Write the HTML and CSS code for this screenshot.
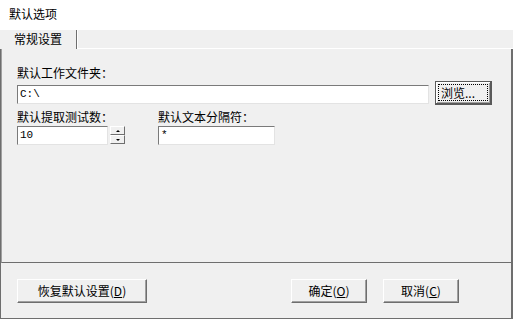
FILE: index.html
```html
<!DOCTYPE html>
<html lang="zh-CN">
<head>
<meta charset="utf-8">
<title>默认选项</title>
<link rel="stylesheet" href="styles.css">
</head>
<body>
<div class="window">
  <div class="titlebar">默认选项</div>
  <div class="tabstrip">
    <div class="tab">常规设置</div>
    <div class="tabfill"></div>
  </div>
  <div class="frame">
    <div class="panel">
      <div class="label">默认工作文件夹：</div>
      <div class="row1">
        <div class="field field-wide">C:\</div>
        <button class="btn btn-browse"><span class="focus">浏览...</span></button>
      </div>
      <div class="row2">
        <div class="group">
          <div class="label">默认提取测试数：</div>
          <div class="spinrow">
            <div class="field field-num">10</div>
            <div class="spin">
              <div class="spinbtn"><span class="tri-up"></span></div>
              <div class="spinbtn"><span class="tri-down"></span></div>
            </div>
          </div>
        </div>
        <div class="group group-sep">
          <div class="label">默认文本分隔符：</div>
          <div class="field field-sep">*</div>
        </div>
      </div>
    </div>
    <div class="footer">
      <button class="btn btn-reset">恢复默认设置(<u>D</u>)</button>
      <div class="spacer"></div>
      <button class="btn btn-ok">确定(<u>O</u>)</button>
      <button class="btn btn-cancel">取消(<u>C</u>)</button>
    </div>
  </div>
</div>
</body>
</html>
```

FILE: styles.css
```css
html, body {
  margin: 0;
  padding: 0;
  background: #f0f0f0;
}
body {
  font-family: "Noto Sans CJK SC", "Liberation Sans", sans-serif;
  font-size: 12px;
  color: #000;
}
.window {
  width: 513px;
  height: 319px;
  display: flex;
  flex-direction: column;
  overflow: hidden;
}
.titlebar {
  height: 30px;
  background: #fff;
  line-height: 28px;
  padding-left: 9px;
  font-size: 12px;
  color: #000;
  flex: none;
}
.tabstrip {
  height: 19px;
  display: flex;
  flex: none;
  background: #f0f0f0;
}
.tab {
  width: 62px;
  padding-left: 14px;
  line-height: 17px;
  border-right: 1px solid #6e6e6e;
  background: #f0f0f0;
}
.tabfill {
  flex: 1;
  border-left: 1px solid #fff;
  border-bottom: 1px solid #fff;
}
.frame {
  flex: 1;
  display: flex;
  flex-direction: column;
  border-left: 1px solid #6e6e6e;
  border-right: 2px solid #6e6e6e;
  border-bottom: 1px solid #6e6e6e;
}
.panel {
  height: 197px;
  border-left: 1px solid #a0a0a0;
  border-bottom: 1px solid #6e6e6e;
  padding: 16px 0 0 15px;
  flex: none;
}
.label {
  height: 16px;
  line-height: 16px;
}
.row1 {
  display: flex;
  align-items: flex-start;
  gap: 6px;
  height: 28px;
}
.field {
  box-sizing: border-box;
  height: 19px;
  background: #fff;
  border-top: 1px solid #7a7a7a;
  border-left: 1px solid #7a7a7a;
  border-right: 1px solid #e3e3e3;
  border-bottom: 1px solid #e3e3e3;
  font-family: "Liberation Mono", "DejaVu Sans Mono", monospace;
  font-size: 11px;
  line-height: 17px;
  padding-left: 2px;
}
.field-wide {
  width: 412px;
  margin-top: 4px;
}
.btn {
  box-sizing: border-box;
  background: #f0f0f0;
  border: 1px solid;
  border-color: #fff #6e6e6e #6e6e6e #fff;
  box-shadow: inset -1px -1px 0 #a0a0a0;
  font-family: "Noto Sans CJK SC", "Liberation Sans", sans-serif;
  font-size: 12px;
  color: #000;
  padding: 0;
  margin: 0;
  height: 24px;
  line-height: 20px;
  text-align: center;
}
.btn u {
  text-decoration: underline;
}
.btn-browse {
  width: 57px;
  border: 1px solid #5a5a5a;
  border-right-width: 2px;
  border-bottom-width: 2px;
  box-shadow: inset 1px 1px 0 #fff, inset -1px -1px 0 #a0a0a0;
  padding: 2px;
  display: flex;
}
.focus {
  flex: 1;
  border: 1px dotted #000;
  line-height: 16px;
  text-align: left;
  padding-left: 2px;
}
.row2 {
  display: flex;
  gap: 33px;
}
.group {
  display: flex;
  flex-direction: column;
  gap: 1px;
}
.spinrow {
  display: flex;
  gap: 2px;
}
.field-num {
  width: 91px;
}
.spin {
  display: flex;
  flex-direction: column;
  width: 15px;
}
.spinbtn {
  box-sizing: border-box;
  height: 9px;
  border: 1px solid;
  border-color: #fff #6e6e6e #6e6e6e #fff;
  background: #f0f0f0;
  display: flex;
  align-items: center;
  justify-content: center;
}
.tri-up {
  width: 0;
  height: 0;
  border-left: 2px solid transparent;
  border-right: 2px solid transparent;
  border-bottom: 2px solid #000;
}
.tri-down {
  width: 0;
  height: 0;
  border-left: 2px solid transparent;
  border-right: 2px solid transparent;
  border-top: 2px solid #000;
}
.field-sep {
  width: 117px;
}
.footer {
  display: flex;
  align-items: flex-start;
  padding: 16px 0 0 16px;
}
.btn-reset {
  width: 130px;
}
.spacer {
  flex: 1;
}
.btn-ok {
  width: 76px;
  margin-right: 16px;
}
.btn-cancel {
  width: 76px;
  margin-right: 52px;
}
```
